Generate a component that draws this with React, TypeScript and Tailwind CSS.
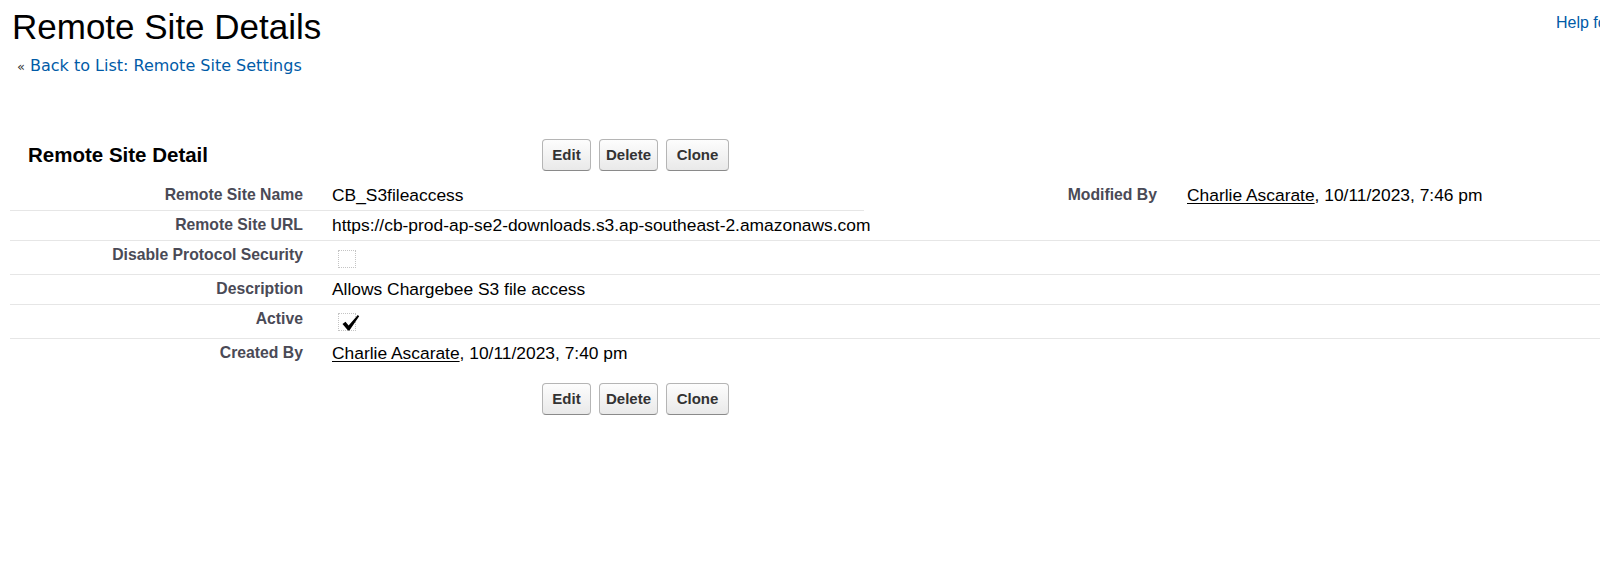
function Btn({ label, w }: { label: string; w: string }) {
  return (
    <button
      className={`${w} h-[32px] flex items-center justify-center rounded-[4px] border border-[#b5b5b5] border-b-[#8a8a8a] bg-linear-to-b from-[#fdfdfd] to-[#e9e9e9] text-[15px] font-bold text-[#333]`}
    >
      {label}
    </button>
  );
}

function Buttons() {
  return (
    <div className="flex gap-[8px]">
      <Btn label="Edit" w="w-[49px]" />
      <Btn label="Delete" w="w-[59px]" />
      <Btn label="Clone" w="w-[63px]" />
    </div>
  );
}

function Check({ checked }: { checked?: boolean }) {
  return (
    <span className="relative mt-[4px] block w-[18px] h-[18px] border border-dotted border-[#c4c4c4]">
      {checked && (
        <svg className="absolute left-[2px] top-[0px]" width="19" height="18" viewBox="0 0 19 18">
          <polygon points="1.5,10 4.5,7.8 7.6,11.6 16.8,1 18.2,2.2 8.4,16.6 7,16.6" fill="#000" />
        </svg>
      )}
    </span>
  );
}

function Label({ children }: { children: React.ReactNode }) {
  return (
    <div className="w-[308px] shrink-0 pr-[15px] pt-[5px] text-right text-[15.75px] leading-[18px] font-bold text-[#4a4a56]">
      {children}
    </div>
  );
}

function Value({ children, pl = "pl-[14px]" }: { children: React.ReactNode; pl?: string }) {
  return <div className={`${pl} pt-[5px] text-[17.4px] leading-[18px] text-black whitespace-nowrap`}>{children}</div>;
}

function User({ when }: { when: string }) {
  return (
    <span>
      <span className="underline underline-offset-2">Charlie Ascarate</span>, {when}
    </span>
  );
}

export default function App() {
  return (
    <div className="w-screen min-h-screen overflow-hidden bg-white font-['Liberation_Sans',Arial,sans-serif]">
      <div className="w-[1721px]">
        {/* page header */}
        <div className="flex">
          <div className="w-[1556px] shrink-0 pl-[12px]">
            <h1 className="pt-[7px] text-[35px] leading-[40px] text-black">Remote Site Details</h1>
            <div className="mt-[9px] pl-[5px] flex items-baseline font-['DejaVu_Sans',Verdana,sans-serif] text-[16px] leading-[20px]">
              <span className="text-[13px] text-[#333] mr-[5px]">«</span>
              <a className="text-[#015ba7]" href="#">Back to List: Remote Site Settings</a>
            </div>
          </div>
          <a className="pt-[13px] text-[16px] leading-[20px] text-[#015ba7] whitespace-nowrap" href="#">
            Help for this Page
          </a>
        </div>

        {/* detail block */}
        <div className="ml-[10px] mt-[62px]">
          <div className="flex items-center h-[32px]">
            <h2 className="w-[532px] shrink-0 pl-[18px] text-[20.5px] font-bold text-black">Remote Site Detail</h2>
            <Buttons />
          </div>

          <div className="mt-[10px]">
            <div className="flex">
              <div className="w-[854px] shrink-0">
                <div className="flex h-[30px] border-b border-[#e6e6e6]">
                  <Label>Remote Site Name</Label>
                  <Value>CB_S3fileaccess</Value>
                </div>
                <div className="flex h-[30px] border-b border-[#e6e6e6]">
                  <Label>Remote Site URL</Label>
                  <Value>https://cb-prod-ap-se2-downloads.s3.ap-southeast-2.amazonaws.com</Value>
                </div>
              </div>
              <div className="flex-1 flex border-b border-[#e6e6e6]">
                <Label>Modified By</Label>
                <Value pl="pl-[15px]">
                  <User when="10/11/2023, 7:46 pm" />
                </Value>
              </div>
            </div>

            <div className="flex h-[34px] border-b border-[#e6e6e6]">
              <Label>Disable Protocol Security</Label>
              <div className="pl-[20px] pt-[5px]">
                <Check />
              </div>
            </div>
            <div className="flex h-[30px] border-b border-[#e6e6e6]">
              <Label>Description</Label>
              <Value>Allows Chargebee S3 file access</Value>
            </div>
            <div className="flex h-[34px] border-b border-[#e6e6e6]">
              <Label>Active</Label>
              <div className="pl-[20px] pt-[4px]">
                <Check checked />
              </div>
            </div>
            <div className="flex h-[30px]">
              <Label>Created By</Label>
              <Value>
                <User when="10/11/2023, 7:40 pm" />
              </Value>
            </div>
          </div>

          <div className="mt-[14px] pl-[532px]">
            <Buttons />
          </div>
        </div>
      </div>
    </div>
  );
}
